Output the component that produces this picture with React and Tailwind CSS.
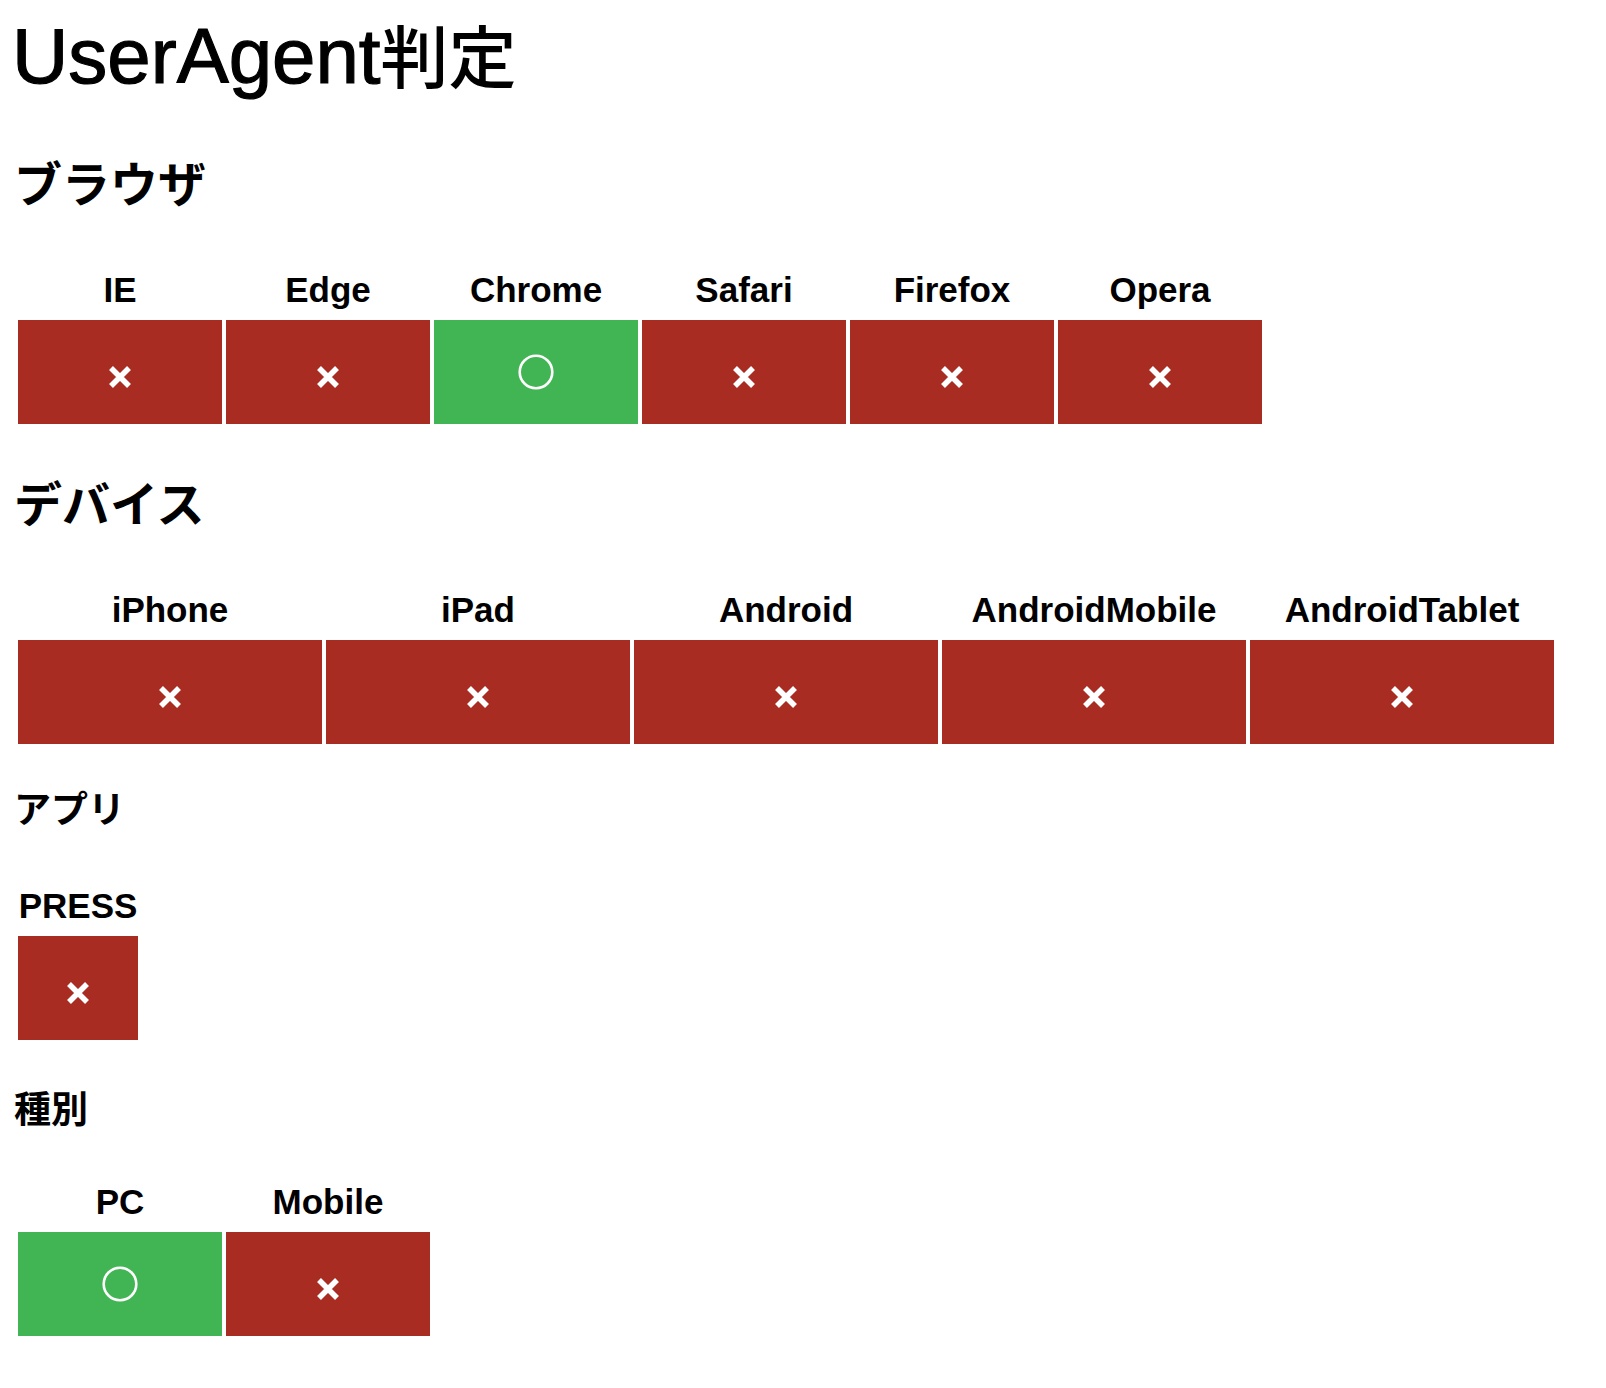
import React from 'react';

const RED = 'bg-[#a82c22]';
const GREEN = 'bg-[#41b553]';

const sections = [
  {
    title: 'ブラウザ',
    level: 2,
    colWidth: 'w-[204px]',
    items: [
      { name: 'IE', ok: false },
      { name: 'Edge', ok: false },
      { name: 'Chrome', ok: true },
      { name: 'Safari', ok: false },
      { name: 'Firefox', ok: false },
      { name: 'Opera', ok: false },
    ],
  },
  {
    title: 'デバイス',
    level: 2,
    colWidth: 'w-[304px]',
    items: [
      { name: 'iPhone', ok: false },
      { name: 'iPad', ok: false },
      { name: 'Android', ok: false },
      { name: 'AndroidMobile', ok: false },
      { name: 'AndroidTablet', ok: false },
    ],
  },
  {
    title: 'アプリ',
    level: 3,
    colWidth: 'w-[120px]',
    items: [{ name: 'PRESS', ok: false }],
  },
  {
    title: '種別',
    level: 3,
    colWidth: 'w-[204px]',
    items: [
      { name: 'PC', ok: true },
      { name: 'Mobile', ok: false },
    ],
  },
];

// margins measured from the screenshot
const headingMargin = ['mt-[64px]', 'mt-[53px]', 'mt-[45px]', 'mt-[49px]'];
const tableMargin = ['mt-[65px]', 'mt-[65px]', 'mt-[60px]', 'mt-[56px]'];

const Cross = () => (
  <svg width="24" height="24" viewBox="0 0 24 24" className="mt-[10px]">
    <path d="M3 3 L21 21 M21 3 L3 21" stroke="#fff" strokeWidth="5.5" fill="none" />
  </svg>
);

const Circle = () => (
  <svg width="36" height="36" viewBox="0 0 36 36">
    <circle cx="18" cy="18" r="16.3" stroke="#fff" strokeWidth="2.6" fill="none" />
  </svg>
);

const ResultTable = ({ items, colWidth, className }) => (
  <div className={`flex gap-[4px] ml-[4px] ${className}`}>
    {items.map((item) => (
      <div key={item.name} className={`flex flex-col ${colWidth}`}>
        <div className="h-[46px] leading-[40px] text-center text-[35px] font-bold text-black font-['Liberation_Sans',sans-serif]">
          {item.name}
        </div>
        <div
          className={`mt-[4px] h-[104px] flex items-center justify-center ${item.ok ? GREEN : RED}`}
        >
          {item.ok ? <Circle /> : <Cross />}
        </div>
      </div>
    ))}
  </div>
);

export default function App() {
  return (
    <div className="min-h-[1388px] bg-white pl-[14px] pb-[40px] font-['Liberation_Sans','Noto_Sans_CJK_JP',sans-serif] text-black">
      <h1 className="mt-[15px] -ml-[2px] h-[78px] leading-[78px] text-[78px] font-normal whitespace-nowrap [-webkit-text-stroke:1.2px_black]">
        UserAgent
        <span className="text-[68px] leading-[78px] font-['Noto_Sans_CJK_JP',sans-serif] font-medium [-webkit-text-stroke:0px]">判定</span>
      </h1>

      {sections.map((s, i) => (
        <section key={s.title}>
          {s.level === 2 ? (
            <h2
              className={`${headingMargin[i]} h-[48px] leading-[48px] text-[48px] font-bold font-['Noto_Sans_CJK_JP',sans-serif]`}
            >
              {s.title}
            </h2>
          ) : (
            <h3
              className={`${headingMargin[i]} h-[37px] leading-[37px] text-[37px] font-bold font-['Noto_Sans_CJK_JP',sans-serif]`}
            >
              {s.title}
            </h3>
          )}
          <ResultTable items={s.items} colWidth={s.colWidth} className={tableMargin[i]} />
        </section>
      ))}
    </div>
  );
}
